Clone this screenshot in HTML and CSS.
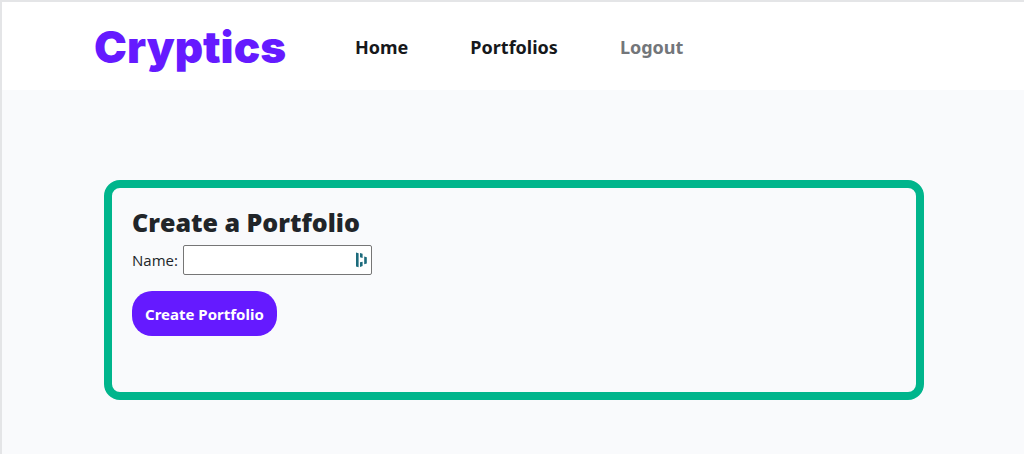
FILE: index.html
```html
<!DOCTYPE html>
<html lang="en">
<head>
<meta charset="utf-8">
<meta name="viewport" content="width=device-width, initial-scale=1">
<title>Cryptics</title>
<link rel="stylesheet" href="styles.css">
</head>
<body>
<header class="navbar">
  <a class="brand" href="#">Cryptics</a>
  <nav class="nav-links">
    <a class="nav-link" href="#">Home</a>
    <a class="nav-link" href="#">Portfolios</a>
    <a class="nav-link nav-link-muted" href="#">Logout</a>
  </nav>
</header>
<main class="content">
  <form class="card">
    <h1 class="card-title">Create a Portfolio</h1>
    <div class="field">
      <label for="name">Name:</label>
      <span class="input-wrap">
        <input class="text-input" id="name" name="name" type="text">
        <svg class="input-icon" width="12" height="16" viewBox="0 0 12 16" fill="#1c6b7c" aria-hidden="true">
          <path d="M0 .5 2.6 1.2V15.2L0 14.5zM4 1 6.6 1.8V6L4 5.2zM8.2 4.5 10.8 5.3V11.5L8.2 12.2zM4 10.2 6.6 9.8V14L4 15z"/>
        </svg>
      </span>
    </div>
    <button class="submit" type="submit">Create Portfolio</button>
  </form>
</main>
</body>
</html>
```

FILE: styles.css
```css
* {
  box-sizing: border-box;
}

body {
  margin: 0;
  min-height: 100vh;
  border-top: 2px solid #e4e5e7;
  border-left: 2px solid #e4e5e7;
  background: #f9fafc;
  color: #212529;
  font-family: "Open Sans", "Noto Sans", sans-serif;
  font-size: 15px;
  line-height: 24px;
}

.navbar {
  display: flex;
  align-items: center;
  gap: 69px;
  height: 88px;
  padding: 2px 92px 0;
  background: #fff;
}

.brand {
  color: #651aff;
  font-family: Inter, "Liberation Sans", sans-serif;
  font-size: 44px;
  font-weight: 900;
  line-height: 64px;
  text-decoration: none;
}

.nav-links {
  display: flex;
  gap: 62px;
}

.nav-link {
  color: #16181b;
  font-family: "Noto Sans", sans-serif;
  font-size: 18px;
  font-weight: 700;
  text-decoration: none;
}

.nav-link-muted {
  color: #73767a;
}

.content {
  padding: 90px 100px 54px 102px;
}

.card {
  min-height: 220px;
  padding: 20px;
  border: 8px solid #00b58c;
  border-radius: 16px;
}

.card-title {
  margin: 0 0 8px;
  font-family: "Open Sans", "Liberation Sans", sans-serif;
  font-size: 25px;
  font-weight: 800;
  line-height: 29px;
}

.field {
  display: flex;
  align-items: center;
  gap: 5px;
  margin-bottom: 16px;
}

.input-wrap {
  position: relative;
  display: flex;
}

.text-input {
  width: 189px;
  height: 30px;
  padding: 1px 24px 1px 4px;
  border: 1px solid #767676;
  border-radius: 2px;
  background: #fff;
  font: inherit;
}

.input-icon {
  position: absolute;
  top: 7px;
  right: 4px;
}

.submit {
  padding: 11px 13px 9px;
  border: 0;
  border-radius: 20px;
  background: #651aff;
  color: #fff;
  font-family: "Noto Sans", sans-serif;
  font-size: 15px;
  font-weight: 700;
  line-height: 25px;
}
```
